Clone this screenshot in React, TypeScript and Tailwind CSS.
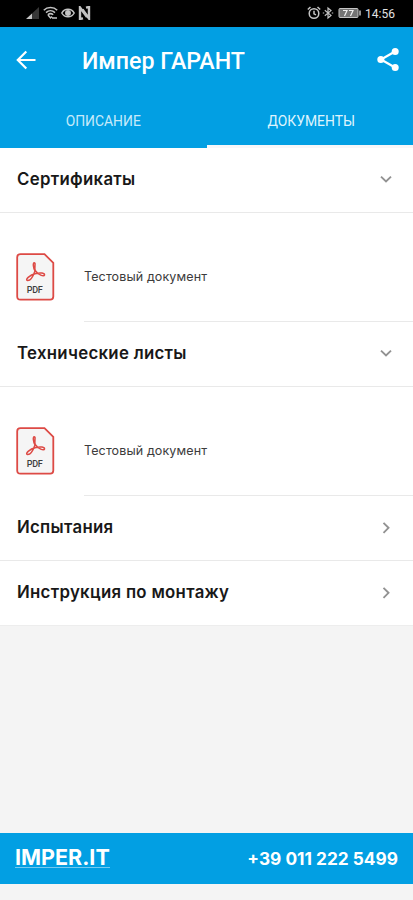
type Doc = { title: string };
type Section = { title: string; docs?: Doc[] };

const sections: Section[] = [
  { title: "Сертификаты", docs: [{ title: "Тестовый документ" }] },
  { title: "Технические листы", docs: [{ title: "Тестовый документ" }] },
  { title: "Испытания" },
  { title: "Инструкция по монтажу" },
];

const StatusBar = () => {
  return (
    <div className="flex h-[27px] items-center justify-between bg-black pb-px pl-[25px] pr-[18px] text-[#c4c4c4]">
      <div className="flex items-center gap-[3px]">
        <svg width="15" height="14" viewBox="0 0 15 14" fill="currentColor">
          <path d="M14 1v12H7V7.500z" opacity="0.28" />
          <path d="M7 7.500V13H1z" />
        </svg>
        <svg width="15" height="14" viewBox="0 0 15 14" fill="none" stroke="currentColor" strokeWidth="1.500">
          <path d="M.8 4.200C4.300.6 10.700.6 14.200 4.200M3 6.600c2.600-2.400 6.400-2.400 9 0M4.800 8.800c1.500-1.300 3.900-1.300 5.400 0" />
          <path d="M5 9l2.500 3L9 10.500M9 12h5" />
        </svg>
        <svg width="14" height="14" viewBox="0 0 14 14" fill="none" stroke="currentColor" strokeWidth="1.500">
          <path d="M.8 7C3.600 1.900 10.400 1.900 13.200 7 10.400 12.100 3.600 12.100.8 7z" />
          <circle cx="7" cy="7" r="2.200" fill="currentColor" />
        </svg>
        <svg width="13" height="14" viewBox="0 0 13 14" fill="none" stroke="currentColor" strokeWidth="2.400">
          <path d="M5 12.300L2 13V1.500l7 9.500M8 1.700l3-.7v11.500L4.500 3.500" />
        </svg>
      </div>
      <div className="flex items-center">
        <svg width="14" height="14" viewBox="0 0 14 14" fill="none" stroke="currentColor" strokeWidth="1.500">
          <circle cx="7" cy="7.500" r="4.800" />
          <path d="M7 4.800v3l2 1M.8 3.500L3.500 1M13.200 3.500L10.500 1" />
        </svg>
        <svg width="12" height="14" viewBox="0 0 12 14" fill="none" stroke="currentColor" strokeWidth="1.200" className="ml-[1px]">
          <path d="M2.800 4.200l6.200 5.200L6 12V2l3 2.600-6.200 5.200" />
          <path d="M.8 7h1.400M9.800 7h1.400" />
        </svg>
        <svg width="24" height="12" viewBox="0 0 24 12" className="ml-[4px]">
          <rect x="1" y="1.500" width="19" height="9" rx="1" fill="#747474" stroke="currentColor" />
          <path d="M22 3.500v5" stroke="currentColor" strokeWidth="1.500" />
          <path d="M5 3.500h4L6.500 9M11 3.500h4L12.500 9" fill="none" stroke="#eee" strokeWidth="1.200" />
        </svg>
        <span className="ml-[3px] pt-px font-[Roboto] text-[12px] leading-none text-[#e2e2e2]">14:56</span>
      </div>
    </div>
  );
};

const Header = () => {
  return (
    <header className="h-[121px] bg-[#029fe3] font-[Roboto] text-white">
      <div className="flex h-[66px] items-center pl-[16px] pr-[13px]">
        <svg width="20" height="20" viewBox="0 0 20 20" fill="none" stroke="currentColor" strokeWidth="2.200">
          <path d="M19.500 10H2.200M10.300 1.500L1.800 10l8.500 8.500" />
        </svg>
        <h1 className="ml-[46px] flex-1 pt-[3px] text-[23.200px] font-medium leading-none">Импер ГАРАНТ</h1>
        <svg width="24" height="26" viewBox="0 0 24 26" fill="currentColor">
          <path d="M19 4.500L5 12.500l14 8" fill="none" stroke="currentColor" strokeWidth="2.200" />
          <circle cx="19.200" cy="4.500" r="3.500" />
          <circle cx="4.800" cy="12.500" r="3.500" />
          <circle cx="19.200" cy="20.500" r="3.500" />
        </svg>
      </div>
      <nav className="grid h-[55px] grid-cols-2 text-[13.900px]">
        <div className="flex items-center justify-center pt-px text-[#c6eafa]">ОПИСАНИЕ</div>
        <div className="flex items-center justify-center border-b-[3px] border-[#f7f7f9] pl-[3px] pt-[4px] text-[#dff4fd]">
          ДОКУМЕНТЫ
        </div>
      </nav>
    </header>
  );
};

const PdfIcon = () => {
  return (
    <svg width="40" height="48" viewBox="0 0 40 48" fill="none">
      <path
        d="M4.500 1.200H28.500L37.300 9.800V43.500Q37.300 46.600 34.200 46.600H4.500Q1.200 46.600 1.200 43.500V4.300Q1.200 1.200 4.500 1.200z"
        fill="#f5f5f5"
        stroke="#dd4a45"
        strokeWidth="1.800"
      />
      <path
        d="M18.300 9.800c-1.700 0-1 4.800.7 8.200-1.600 4.500-4.700 9.800-7.400 9.500-3-.6 1.800-5.400 8.200-7 4.800-1.200 9-.4 8.700 1.500-.4 2-6.600-.3-9.100-4.300-1.600-2.800.8-7.800-1.100-7.900z"
        stroke="#dd4a45"
        strokeWidth="1.500"
      />
      <text x="10.800" y="39.800" fill="#3d3d3d" fontFamily="Roboto, sans-serif" fontSize="9" fontWeight="500" textLength="16">
        PDF
      </text>
    </svg>
  );
};

const Chevron = ({ open }: { open: boolean }) => {
  return (
    <svg width="14" height="14" viewBox="0 0 14 14" fill="none" stroke="#929292" strokeWidth="1.900">
      <path d={open ? "M2 3.600l5 4.800 5-4.800" : "M4.500 1.800L9.500 6.800l-5 5"} />
    </svg>
  );
};

const SectionRow = ({ section, last }: { section: Section; last: boolean }) => {
  return (
    <section>
      <div
        className={`flex h-[65px] items-center justify-between border-b pl-[17px] pr-[20px] ${
          last ? "border-[#ededed]" : "border-[#e9e9e9]"
        }`}
      >
        <h2 className="pb-px text-[16.800px] font-semibold leading-none tracking-[0.3px] text-[#181818]">
          {section.title}
        </h2>
        <Chevron open={!!section.docs} />
      </div>
      {section.docs?.map((doc) => (
        <div key={doc.title} className="flex h-[109px] pl-[16px]">
          <div className="flex w-[68px] items-center pt-[19px]">
            <PdfIcon />
          </div>
          <div className="flex flex-1 items-center border-b border-[#e9e9e9] pt-[20px]">
            <p className="text-[12.500px] leading-none tracking-[0.12px] text-[#3c3c3c]">{doc.title}</p>
          </div>
        </div>
      ))}
    </section>
  );
};

const App = () => {
  return (
    <div className="flex h-[900px] w-[413px] flex-col overflow-hidden bg-[#f4f4f4] font-[Inter,sans-serif]">
      <StatusBar />
      <Header />
      <main className="flex-1">
        <div className="bg-white">
          {sections.map((section, index) => (
            <SectionRow key={section.title} section={section} last={index === sections.length - 1} />
          ))}
        </div>
      </main>
      <footer className="mb-[16px] flex h-[51px] items-center justify-between bg-[#029fe3] pl-[15px] pr-[15px] font-bold text-white">
        <span className="mb-[3px] border-b border-[#74c9ef] text-[21.500px] leading-[20px]">IMPER.IT</span>
        <span className="pt-px text-[17.300px] leading-none">+39 011 222 5499</span>
      </footer>
    </div>
  );
};

export default App;
